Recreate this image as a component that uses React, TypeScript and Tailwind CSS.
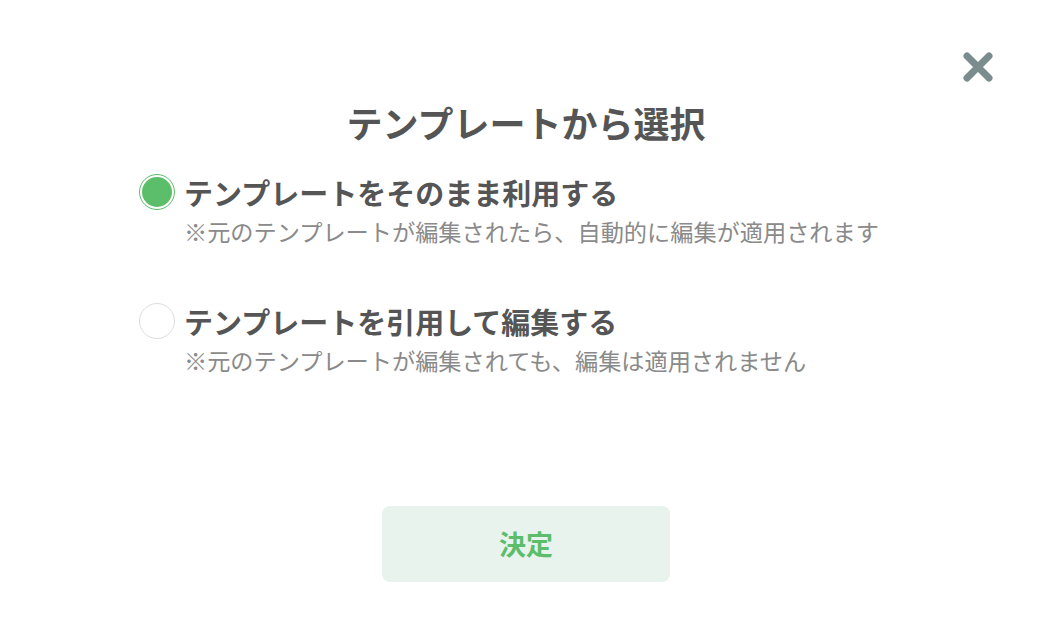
import { useState } from "react";

const options = [
  {
    label: "テンプレートをそのまま利用する",
    note: "※元のテンプレートが編集されたら、自動的に編集が適用されます",
  },
  {
    label: "テンプレートを引用して編集する",
    note: "※元のテンプレートが編集されても、編集は適用されません",
  },
];

export default function App() {
  const [selected, setSelected] = useState(0);

  return (
    <div
      className="relative h-[624px] w-[1058px] bg-white"
      style={{ fontFamily: '"Noto Sans CJK JP", "Noto Sans", sans-serif' }}
    >
      {/* close */}
      <button className="absolute left-[960px] top-[49px] flex h-9 w-9 items-center justify-center">
        <svg width="34" height="34" viewBox="0 0 34 34">
          <path
            d="M6 6 L28 28 M28 6 L6 28"
            stroke="#7b8c8f"
            strokeWidth="7"
            strokeLinecap="round"
          />
        </svg>
      </button>

      <div className="flex w-[1052px] flex-col items-center pt-[97px]">
        <h1 className="text-[36px] font-bold leading-[50px] text-[#555555]">
          テンプレートから選択
        </h1>

        <div className="mt-[25px] flex w-[774px] flex-col gap-[51px]">
          {options.map((o, i) => (
            <label
              key={i}
              className="flex cursor-pointer items-start gap-[9px]"
              onClick={() => setSelected(i)}
            >
              <span
                className={
                  selected === i
                    ? "mt-[2px] flex h-[36px] w-[36px] shrink-0 items-center justify-center rounded-full border border-[#5cbd6a] bg-white"
                    : "mt-[2px] flex h-[36px] w-[36px] shrink-0 items-center justify-center rounded-full border border-[#dddddd] bg-white"
                }
              >
                {selected === i && (
                  <span className="h-[30px] w-[30px] rounded-full bg-[#5cbd6a]" />
                )}
              </span>
              <span className="flex flex-col">
                <span className="text-[29px] font-bold leading-[40px] text-[#555555]">
                  {o.label}
                </span>
                <span className="text-[23.2px] leading-[38px] text-[#8a8a8a]">
                  {o.note}
                </span>
              </span>
            </label>
          ))}
        </div>

        <button className="mt-[127px] flex h-[76px] w-[288px] items-center justify-center rounded-[8px] bg-[#e7f3ec] text-[27px] font-bold text-[#5cbd6a]">
          決定
        </button>
      </div>
    </div>
  );
}
